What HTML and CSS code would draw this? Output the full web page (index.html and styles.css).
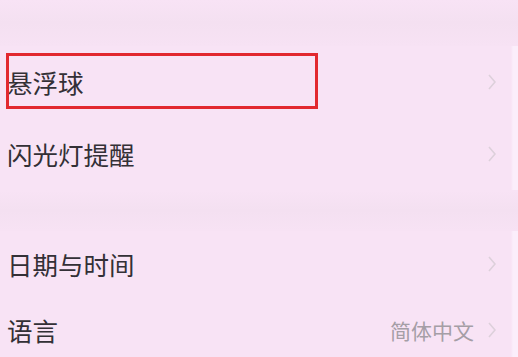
FILE: index.html
```html
<!DOCTYPE html>
<html lang="zh">
<head>
<meta charset="utf-8">
<link rel="stylesheet" href="styles.css">
</head>
<body>
<div class="screen">
  <div class="band band-top"></div>
  <div class="group g1">
    <div class="row">
      <span class="label">悬浮球</span>
      <svg class="chev" viewBox="0 0 8 16"><polyline points="1,1 7,8 1,15"/></svg>
      <div class="highlight"></div>
    </div>
    <div class="row">
      <span class="label">闪光灯提醒</span>
      <svg class="chev" viewBox="0 0 8 16"><polyline points="1,1 7,8 1,15"/></svg>
    </div>
  </div>
  <div class="band band-mid"></div>
  <div class="group g2">
    <div class="row">
      <span class="label">日期与时间</span>
      <svg class="chev" viewBox="0 0 8 16"><polyline points="1,1 7,8 1,15"/></svg>
    </div>
    <div class="row">
      <span class="label">语言</span>
      <span class="value">简体中文</span>
      <svg class="chev" viewBox="0 0 8 16"><polyline points="1,1 7,8 1,15"/></svg>
    </div>
  </div>
</div>
</body>
</html>
```
FILE: styles.css
```css
html, body {
  margin: 0;
  padding: 0;
  background: #f8e3f5;
}
.screen {
  width: 518px;
  height: 357px;
  overflow: hidden;
  font-family: "Noto Sans CJK SC", "Noto Sans", sans-serif;
  background: linear-gradient(to right, #f8e3f5 0, #f8e3f5 511px, #fbeefb 513px, #fbeefb 518px);
}
.band {
  background: linear-gradient(to bottom, #f8e3f5, #f4e0f1 50%, #f7e2f4);
}
.band-top { height: 46px; }
.band-mid { height: 41px; }
.g1 .row { height: 72px; }
.g2 .row { height: 66px; }
.row {
  position: relative;
  display: flex;
  align-items: center;
  padding: 0 22px 0 7px;
}
.label {
  flex: 1;
  font-size: 25.5px;
  font-weight: 400;
  color: #333036;
  line-height: 1;
}
.value {
  font-size: 21px;
  color: #a59ea6;
  margin-right: 14px;
  line-height: 1;
}
.chev {
  width: 8px;
  height: 16px;
  fill: none;
  stroke: #ddd0db;
  stroke-width: 1.6;
}
.highlight {
  position: absolute;
  left: 6px;
  top: 7px;
  width: 306px;
  height: 50px;
  border: 3px solid #e2282f;
}
```
